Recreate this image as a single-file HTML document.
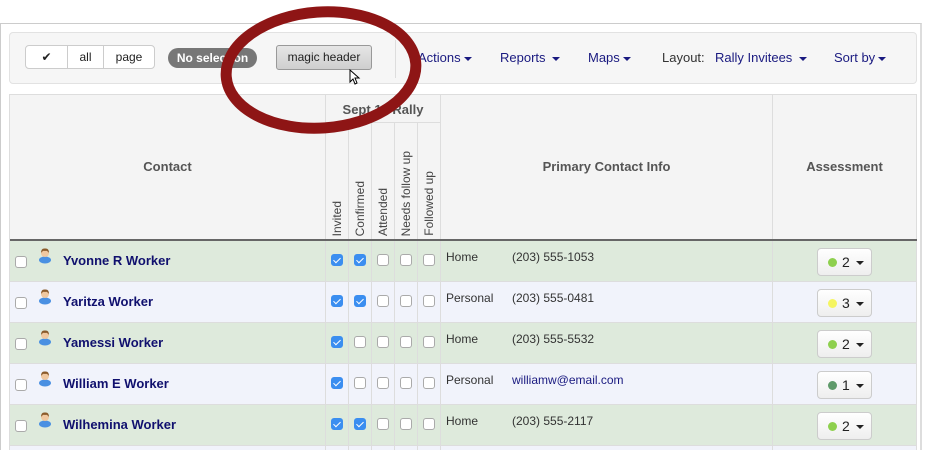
<!DOCTYPE html>
<html><head><style>
*{box-sizing:border-box;margin:0;padding:0}
html,body{width:925px;height:450px;overflow:hidden}
body{background:#fff;font-family:"Liberation Sans",sans-serif;position:relative;font-size:13px;color:#333}
div,span{white-space:nowrap}
.frame{position:absolute;left:0;top:23px;width:922px;height:427px;border:1px solid #ccc;border-right:2px solid #ddd;border-bottom:none}
.tb{position:absolute;left:9px;top:32px;width:908px;height:52px;background:#f6f6f6;border:1px solid #e2e2e2;border-radius:4px}
.bg{position:absolute;top:45px;height:24px;border:1px solid #ccc;background:#fff;border-radius:4px;display:flex}
.bg div{border-right:1px solid #ccc;text-align:center;line-height:22px;font-size:12px;color:#222}
.pill{position:absolute;left:168px;top:48px;width:89px;height:20px;border-radius:10px;background:#777;color:#fff;font-weight:bold;font-size:12px;line-height:20px;text-align:center}
.magic{position:absolute;left:276px;top:45px;width:96px;height:25px;border:1px solid #999;border-radius:3px;background:linear-gradient(#e6e6e6,#cfcfcf);font-size:12px;line-height:23px;text-align:center;color:#222}
.menu{position:absolute;top:50px;font-size:13px;color:#1a1a80}
.tri{display:inline-block;border-left:4px solid transparent;border-right:4px solid transparent;border-top:4px solid #1a1a80;vertical-align:middle;margin-left:3px}
.tbl{position:absolute;left:9px;top:94px;width:908px;height:356px;border-left:1px solid #ddd;border-right:1px solid #ddd}
.th{position:absolute;top:94px;height:146px;background:#f4f4f4;border-top:1px solid #ddd;border-right:1px solid #ddd}
.hb{font-weight:bold;color:#555;font-size:13px;position:absolute;width:100%;text-align:center}
.vt{position:absolute;bottom:4px;left:4px;writing-mode:vertical-rl;transform:rotate(180deg);font-size:12px;color:#444}
.row{position:absolute;left:10px;width:906px;height:41px;border-bottom:1px solid #ddd}
.cb{position:absolute;width:12px;height:12px;border:1px solid #aaa;border-radius:3px;background:#fff}
.cb.on{background:#3b8ef0;border-color:#3b8ef0}
.cb.on::after{content:"";position:absolute;left:3px;top:1px;width:3px;height:6px;border:solid #fff;border-width:0 1.5px 1.5px 0;transform:rotate(45deg)}
.name{position:absolute;font-weight:bold;color:#10106e;font-size:13px}
.as{position:absolute;width:55px;height:28px;border:1px solid #ccc;border-radius:4px;background:linear-gradient(#fff,#eee);font-size:14px;color:#222;line-height:26px;padding-left:10px}
.dot{display:inline-block;width:9px;height:9px;border-radius:50%;margin-right:5px}
.as .t{display:inline-block;border-left:4px solid transparent;border-right:4px solid transparent;border-top:4px solid #222;vertical-align:middle;margin-left:6px}
.p{position:absolute;font-size:12px;color:#333;top:9px}
</style></head><body>
<div class="frame"></div>
<div class="tb"></div>
<div class="bg" style="left:25px;width:130px"><div style="width:42px">✔</div><div style="width:36px">all</div><div style="width:50px;border:none">page</div></div>
<div class="pill">No selection</div>
<div class="magic">magic header</div>
<div style="position:absolute;left:395px;top:40px;width:1px;height:38px;background:#ddd"></div>
<div class="menu" style="left:418px">Actions<span class="tri"></span></div>
<div class="menu" style="left:500px">Reports <span class="tri"></span></div>
<div class="menu" style="left:588px">Maps<span class="tri"></span></div>
<div class="menu" style="left:662px;color:#333">Layout:</div>
<div class="menu" style="left:715px">Rally Invitees <span class="tri"></span></div>
<div class="menu" style="left:834px">Sort by<span class="tri"></span></div>
<div class="tbl"></div>
<div class="th" style="left:10px;width:316px"><div class="hb" style="top:64px">Contact</div></div>
<div class="th" style="left:326px;width:115px;height:29px;border-bottom:1px solid #ddd"><div class="hb" style="top:7px">Sept 14 Rally</div></div>
<div class="th" style="left:326px;top:123px;height:117px;width:23px;border-top:none"><span class="vt">Invited</span></div>
<div class="th" style="left:349px;top:123px;height:117px;width:23px;border-top:none"><span class="vt">Confirmed</span></div>
<div class="th" style="left:372px;top:123px;height:117px;width:23px;border-top:none"><span class="vt">Attended</span></div>
<div class="th" style="left:395px;top:123px;height:117px;width:23px;border-top:none"><span class="vt">Needs follow up</span></div>
<div class="th" style="left:418px;top:123px;height:117px;width:23px;border-top:none"><span class="vt">Followed up</span></div>
<div class="th" style="left:441px;width:332px"><div class="hb" style="top:64px">Primary Contact Info</div></div>
<div class="th" style="left:773px;width:144px"><div class="hb" style="top:64px">Assessment</div></div>
<div style="position:absolute;left:10px;top:239px;width:907px;height:2px;background:#666"></div>

<div class="row" style="top:241px;background:#deeadc"></div>
<div class="row" style="top:282px;background:#f1f3fb"></div>
<div class="row" style="top:323px;background:#deeadc"></div>
<div class="row" style="top:364px;background:#f1f3fb"></div>
<div class="row" style="top:405px;background:#deeadc"></div>
<div class="row" style="top:446px;height:4px;border:none;background:#f1f3fb"></div>
<svg width="925" height="450" style="position:absolute;left:0;top:0">
<g stroke="#ddd" stroke-width="1">
<line x1="325.5" y1="241" x2="325.5" y2="450"/><line x1="348.5" y1="241" x2="348.5" y2="450"/><line x1="371.5" y1="241" x2="371.5" y2="450"/><line x1="394.5" y1="241" x2="394.5" y2="450"/><line x1="417.5" y1="241" x2="417.5" y2="450"/><line x1="440.5" y1="241" x2="440.5" y2="450"/><line x1="772.5" y1="241" x2="772.5" y2="450"/>
</g>
<defs><g id="pp"><ellipse cx="7" cy="12" rx="6" ry="3.5" fill="#4a90e2"/><circle cx="7" cy="5" r="4" fill="#f0c8a0"/><path d="M3 5 Q3 0 7 0.5 Q11 0 11 5 Q9 2 7 3 Q5 2 3 5Z" fill="#8a5a2a"/></g></defs>
<use href="#pp" x="38" y="248"/><use href="#pp" x="38" y="289"/><use href="#pp" x="38" y="330"/><use href="#pp" x="38" y="371"/><use href="#pp" x="38" y="412"/>
</svg>

<div style="position:absolute;left:0;top:241px;width:925px;height:41px">
<div class="cb" style="left:15px;top:15px"></div>
<div class="name" style="left:63px;top:12px">Yvonne R Worker</div>
<div class="cb on" style="left:331px;top:13px"></div><div class="cb on" style="left:354px;top:13px"></div><div class="cb" style="left:377px;top:13px"></div><div class="cb" style="left:400px;top:13px"></div><div class="cb" style="left:423px;top:13px"></div>
<div class="p" style="left:446px">Home</div><div class="p" style="left:512px">(203) 555-1053</div>
<div class="as" style="left:817px;top:7px"><span class="dot" style="background:#8ed04e"></span>2<span class="t"></span></div>
</div>
<div style="position:absolute;left:0;top:282px;width:925px;height:41px">
<div class="cb" style="left:15px;top:15px"></div>
<div class="name" style="left:63px;top:12px">Yaritza Worker</div>
<div class="cb on" style="left:331px;top:13px"></div><div class="cb on" style="left:354px;top:13px"></div><div class="cb" style="left:377px;top:13px"></div><div class="cb" style="left:400px;top:13px"></div><div class="cb" style="left:423px;top:13px"></div>
<div class="p" style="left:446px">Personal</div><div class="p" style="left:512px">(203) 555-0481</div>
<div class="as" style="left:817px;top:7px"><span class="dot" style="background:#f5f560"></span>3<span class="t"></span></div>
</div>
<div style="position:absolute;left:0;top:323px;width:925px;height:41px">
<div class="cb" style="left:15px;top:15px"></div>
<div class="name" style="left:63px;top:12px">Yamessi Worker</div>
<div class="cb on" style="left:331px;top:13px"></div><div class="cb" style="left:354px;top:13px"></div><div class="cb" style="left:377px;top:13px"></div><div class="cb" style="left:400px;top:13px"></div><div class="cb" style="left:423px;top:13px"></div>
<div class="p" style="left:446px">Home</div><div class="p" style="left:512px">(203) 555-5532</div>
<div class="as" style="left:817px;top:7px"><span class="dot" style="background:#8ed04e"></span>2<span class="t"></span></div>
</div>
<div style="position:absolute;left:0;top:364px;width:925px;height:41px">
<div class="cb" style="left:15px;top:15px"></div>
<div class="name" style="left:63px;top:12px">William E Worker</div>
<div class="cb on" style="left:331px;top:13px"></div><div class="cb" style="left:354px;top:13px"></div><div class="cb" style="left:377px;top:13px"></div><div class="cb" style="left:400px;top:13px"></div><div class="cb" style="left:423px;top:13px"></div>
<div class="p" style="left:446px">Personal</div><div class="p" style="left:512px;color:#1a1a80">williamw@email.com</div>
<div class="as" style="left:817px;top:7px"><span class="dot" style="background:#5f9a6a"></span>1<span class="t"></span></div>
</div>
<div style="position:absolute;left:0;top:405px;width:925px;height:41px">
<div class="cb" style="left:15px;top:15px"></div>
<div class="name" style="left:63px;top:12px">Wilhemina Worker</div>
<div class="cb on" style="left:331px;top:13px"></div><div class="cb on" style="left:354px;top:13px"></div><div class="cb" style="left:377px;top:13px"></div><div class="cb" style="left:400px;top:13px"></div><div class="cb" style="left:423px;top:13px"></div>
<div class="p" style="left:446px">Home</div><div class="p" style="left:512px">(203) 555-2117</div>
<div class="as" style="left:817px;top:7px"><span class="dot" style="background:#8ed04e"></span>2<span class="t"></span></div>
</div>
<svg width="925" height="450" style="position:absolute;left:0;top:0;pointer-events:none">
<ellipse cx="321" cy="70" rx="95" ry="58" fill="none" stroke="#8e1515" stroke-width="11" transform="rotate(-4 321 70)"/>
<path d="M350 70 l0 12 l3 -3 l2 5 l2 -1 l-2 -5 l4 0 z" fill="#fff" stroke="#000" stroke-width="1"/>
</svg>
</body></html>
